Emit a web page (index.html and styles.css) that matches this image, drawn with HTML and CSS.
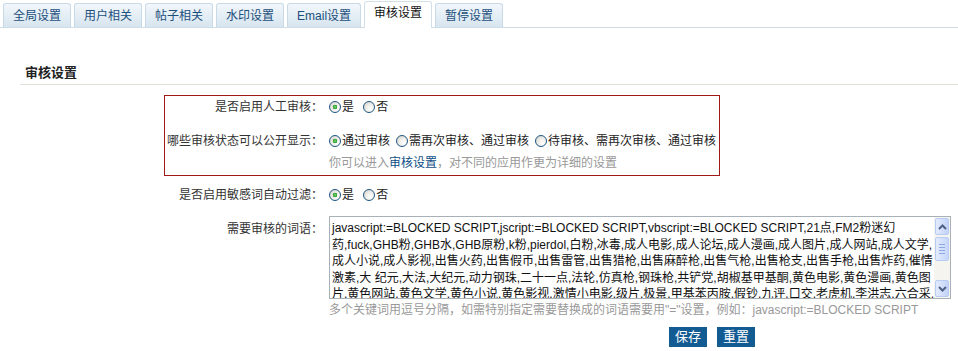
FILE: index.html
```html
<html>
<head>
<meta http-equiv="content-type" content="text/html; charset=UTF-8">
<title>审核设置</title>
<link rel="stylesheet" href="styles.css">
</head>
<body>
	<!-- tabs -->
	<div class="tabs">
		<a class="tab" href="javascript:;">全局设置</a>
		<a class="tab" href="javascript:;">用户相关</a>
		<a class="tab" href="javascript:;">帖子相关</a>
		<a class="tab" href="javascript:;">水印设置</a>
		<a class="tab" href="javascript:;">Email设置</a>
		<a class="tab on" href="javascript:;">审核设置</a>
		<a class="tab" href="javascript:;">暂停设置</a>
	</div>

	<div class="main">
		<h3 class="title">审核设置</h3>

		<div class="form">
			<div class="box">
				<div class="row">
					<div class="lbl">是否启用人工审核：</div>
					<div class="val">
						<label class="opt"><input type="radio" name="manual" checked>是</label>
						<label class="opt"><input type="radio" name="manual">否</label>
					</div>
				</div>
				<div class="row">
					<div class="lbl">哪些审核状态可以公开显示：</div>
					<div class="val">
						<div class="opts">
							<label class="opt"><input type="radio" name="show" checked>通过审核</label>
							<label class="opt"><input type="radio" name="show">需再次审核、通过审核</label>
							<label class="opt"><input type="radio" name="show">待审核、需再次审核、通过审核</label>
						</div>
						<div class="tip">你可以进入<a href="javascript:;">审核设置</a>，对不同的应用作更为详细的设置</div>
					</div>
				</div>
			</div>

			<div class="row out">
				<div class="lbl">是否启用敏感词自动过滤：</div>
				<div class="val">
					<label class="opt"><input type="radio" name="filter" checked>是</label>
					<label class="opt"><input type="radio" name="filter">否</label>
				</div>
			</div>

			<div class="row out">
				<div class="lbl lbl-top">需要审核的词语：</div>
				<div class="val">
					<div class="words">
						<textarea class="ta">javascript:=BLOCKED SCRIPT,jscript:=BLOCKED SCRIPT,vbscript:=BLOCKED SCRIPT,21点,FM2粉迷幻药,fuck,GHB粉,GHB水,GHB原粉,k粉,pierdol,白粉,冰毒,成人电影,成人论坛,成人漫画,成人图片,成人网站,成人文学,成人小说,成人影视,出售火药,出售假币,出售雷管,出售猎枪,出售麻醉枪,出售气枪,出售枪支,出售手枪,出售炸药,催情激素,大 纪元,大法,大纪元,动力钢珠,二十一点,法轮,仿真枪,钢珠枪,共铲党,胡椒基甲基酮,黄色电影,黄色漫画,黄色图片,黄色网站,黄色文学,黄色小说,黄色影视,激情小电影,级片,极景,甲基苯丙胺,假钞,九评,口交,老虎机,李洪志,六合采,吗啡,迷幻药,迷魂药,摇头丸</textarea>
						<div class="sbar">
							<span class="sbtn"><svg width="9" height="6" viewBox="0 0 9 6"><path d="M1 5 L4.5 1.5 L8 5" fill="none" stroke="#4d6185" stroke-width="2"/></svg></span>
							<span class="thumb"><i></i><i></i><i></i><i></i></span>
							<span class="track"></span>
							<span class="sbtn"><svg width="9" height="6" viewBox="0 0 9 6"><path d="M1 1 L4.5 4.5 L8 1" fill="none" stroke="#4d6185" stroke-width="2"/></svg></span>
						</div>
					</div>
					<div class="tip">多个关键词用逗号分隔，如需特别指定需要替换成的词语需要用"="设置，例如：javascript:=BLOCKED SCRIPT</div>
					<div class="btns">
						<input class="btn" type="button" value="保存"/>
						<input class="btn" type="button" value="重置"/>
					</div>
				</div>
			</div>
		</div>
	</div>
</body>
</html>
```

FILE: styles.css
```css
*{margin: 0;padding: 0;}
body{font: 12px/22px "Liberation Sans", "Noto Sans CJK SC", sans-serif;color: #333;background: #fff;}
a{text-decoration: none;}

/* tabs */
.tabs{display: flex;align-items: flex-end;height: 24px;padding: 3px 0 0 3px;border-bottom: 1px solid #cddce7;}
.tab{box-sizing: border-box;height: 24px;line-height: 24px;padding: 0 9px;margin-right: 3px;border: 1px solid #c9dae6;border-bottom: 0;border-radius: 3px 3px 0 0;background: linear-gradient(#f2f7fb, #d7e5ef);color: #1c4f7c;font-size: 12px;white-space: nowrap;}
.tab.on{height: 27px;line-height: 22px;margin-bottom: -1px;background: #fff;color: #111;border-color: #d3e0ea;}

/* section */
.main{padding: 0 0 0 20px;}
.title{margin-top: 34px;padding-left: 5px;height: 22px;line-height: 22px;font-size: 13px;font-weight: bold;color: #222;border-bottom: 1px solid #e4e1da;}

.form{margin: 10px 0 0 144px;}
.box{width: 554px;border: 1px solid #a11a1a;padding-bottom: 1px;}
.box .row + .row{margin-top: 10px;}
.row{display: flex;}
.out{padding-left: 1px;margin-top: 8px;}
.lbl{flex: none;width: 158px;text-align: right;color: #333;white-space: nowrap;}
.lbl-top{padding-top: 2px;}
.val{flex: none;padding-left: 6px;white-space: nowrap;}

/* radios */
.opts{display: flex;}
.opt{display: inline-flex;align-items: center;margin-right: 6px;color: #222;}
.opt input{flex: none;appearance: none;-webkit-appearance: none;width: 12px;height: 12px;margin: 0 1px 0 0;border: 1px solid #1f5686;border-radius: 50%;background: radial-gradient(circle at 70% 70%, #ffffff 0, #f2f1ec 40%, #cfcdc4 100%);box-sizing: border-box;}
.opt input:checked{background: radial-gradient(circle, #7fd27f 0, #2f9e2f 2px, transparent 2.6px), radial-gradient(circle at 70% 70%, #ffffff 0, #f2f1ec 40%, #cfcdc4 100%);}

.tip{color: #999;}
.tip a{color: #0f4e85;}

/* words textarea */
.words{display: flex;box-sizing: border-box;width: 622px;height: 83px;border: 1px solid #a9b1b8;}
.ta{flex: 1;border: 0;resize: none;overflow: hidden;padding: 3px 0 2px 2px;font: 12px/16.5px "Liberation Sans", "Noto Sans CJK SC", sans-serif;color: #111;outline: none;white-space: pre-wrap;}
.sbar{flex: none;display: flex;flex-direction: column;width: 16px;padding: 1px 0;background: #f5f4ef;box-sizing: border-box;}
.sbtn{display: flex;align-items: center;justify-content: center;height: 15px;margin: 0 1px;border: 1px solid #b8cbf2;border-radius: 2px;background: linear-gradient(90deg, #e3ebfd, #c2d3f8);}
.thumb{display: flex;flex-direction: column;align-items: center;justify-content: center;height: 22px;margin: 2px 1px 0;border: 1px solid #b8cbf2;border-radius: 2px;background: linear-gradient(90deg, #e3ebfd, #c6d6fa);}
.thumb i{display: block;width: 6px;height: 1px;margin: 1px 0;background: #8ea7e0;}
.track{flex: 1;}

.btns{display: flex;gap: 10px;padding: 6px 0 0 340px;}
.btn{height: 20px;padding: 0 6px;border: 0;background: #135b93;color: #fff;font: 13px/20px "Liberation Sans", "Noto Sans CJK SC", sans-serif;cursor: pointer;}
```
